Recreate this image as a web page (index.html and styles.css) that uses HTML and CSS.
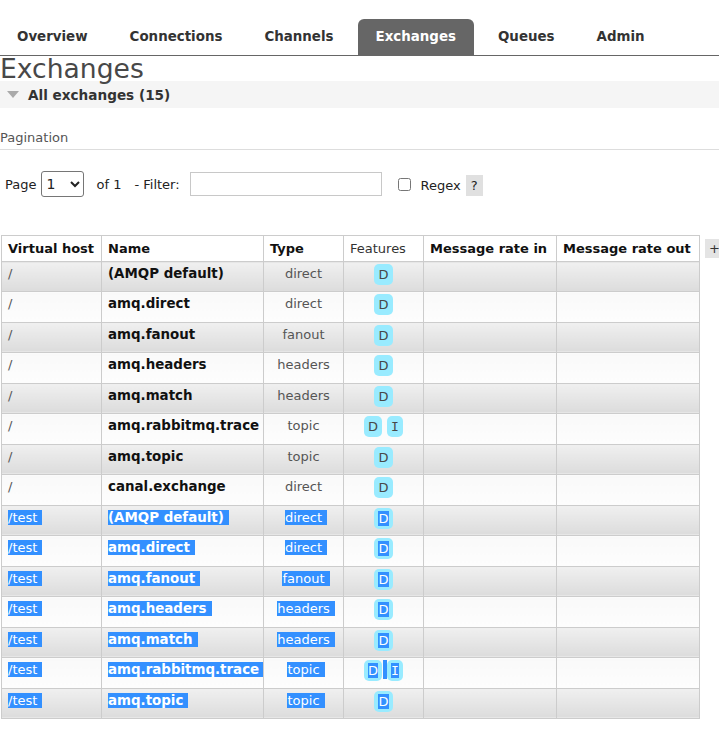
FILE: index.html
```
<!DOCTYPE html>
<html>
<head>
<meta charset="utf-8">
<link rel="stylesheet" href="styles.css">
</head>
<body>
<div class="menu">
  <ul class="tabs">
    <li class="tab">Overview</li>
    <li class="tab">Connections</li>
    <li class="tab">Channels</li>
    <li class="tab active">Exchanges</li>
    <li class="tab">Queues</li>
    <li class="tab">Admin</li>
  </ul>
</div>
<h1 class="title">Exchanges</h1>
<div class="section-head"><span class="tri"></span><span>All exchanges (15)</span></div>
<div class="pag-label">Pagination</div>
<div class="pager">
  <span class="lbl">Page</span>
  <select class="page-sel"><option>1</option></select>
  <span class="lbl of">of 1</span>
  <span class="lbl">- Filter:</span>
  <input class="filter" type="text">
  <input class="chk" type="checkbox">
  <span class="lbl regex">Regex</span>
  <span class="help">?</span>
</div>
<div class="table-wrap">
  <table class="list">
    <colgroup>
      <col class="c-vh"><col class="c-name"><col class="c-type"><col class="c-feat"><col class="c-in"><col class="c-out">
    </colgroup>
    <thead>
      <tr>
        <th>Virtual host</th><th>Name</th><th>Type</th><th class="th-norm">Features</th><th>Message rate in</th><th>Message rate out</th>
      </tr>
    </thead>
    <tbody>
      <tr class="alt1"><td class="vh">/</td><td class="nm">(AMQP default)</td><td class="ty">direct</td><td class="ft"><span class="badge">D</span></td><td></td><td></td></tr>
      <tr class="alt2"><td class="vh">/</td><td class="nm">amq.direct</td><td class="ty">direct</td><td class="ft"><span class="badge">D</span></td><td></td><td></td></tr>
      <tr class="alt1"><td class="vh">/</td><td class="nm">amq.fanout</td><td class="ty">fanout</td><td class="ft"><span class="badge">D</span></td><td></td><td></td></tr>
      <tr class="alt2"><td class="vh">/</td><td class="nm">amq.headers</td><td class="ty">headers</td><td class="ft"><span class="badge">D</span></td><td></td><td></td></tr>
      <tr class="alt1"><td class="vh">/</td><td class="nm">amq.match</td><td class="ty">headers</td><td class="ft"><span class="badge">D</span></td><td></td><td></td></tr>
      <tr class="alt2"><td class="vh">/</td><td class="nm">amq.rabbitmq.trace</td><td class="ty">topic</td><td class="ft"><span class="badge">D</span><span class="gap"></span><span class="badge badge-i">I</span></td><td></td><td></td></tr>
      <tr class="alt1"><td class="vh">/</td><td class="nm">amq.topic</td><td class="ty">topic</td><td class="ft"><span class="badge">D</span></td><td></td><td></td></tr>
      <tr class="alt2"><td class="vh">/</td><td class="nm">canal.exchange</td><td class="ty">direct</td><td class="ft"><span class="badge">D</span></td><td></td><td></td></tr>
      <tr class="alt1"><td class="vh"><span class="sel">/test</span></td><td class="nm"><span class="sel">(AMQP default)</span></td><td class="ty"><span class="sel">direct</span></td><td class="ft"><span class="badge"><span class="sel-in">D</span></span></td><td></td><td></td></tr>
      <tr class="alt2"><td class="vh"><span class="sel">/test</span></td><td class="nm"><span class="sel">amq.direct</span></td><td class="ty"><span class="sel">direct</span></td><td class="ft"><span class="badge"><span class="sel-in">D</span></span></td><td></td><td></td></tr>
      <tr class="alt1"><td class="vh"><span class="sel">/test</span></td><td class="nm"><span class="sel">amq.fanout</span></td><td class="ty"><span class="sel">fanout</span></td><td class="ft"><span class="badge"><span class="sel-in">D</span></span></td><td></td><td></td></tr>
      <tr class="alt2"><td class="vh"><span class="sel">/test</span></td><td class="nm"><span class="sel">amq.headers</span></td><td class="ty"><span class="sel">headers</span></td><td class="ft"><span class="badge"><span class="sel-in">D</span></span></td><td></td><td></td></tr>
      <tr class="alt1"><td class="vh"><span class="sel">/test</span></td><td class="nm"><span class="sel">amq.match</span></td><td class="ty"><span class="sel">headers</span></td><td class="ft"><span class="badge"><span class="sel-in">D</span></span></td><td></td><td></td></tr>
      <tr class="alt2"><td class="vh"><span class="sel">/test</span></td><td class="nm"><span class="sel">amq.rabbitmq.trace</span></td><td class="ty"><span class="sel">topic</span></td><td class="ft"><span class="badge"><span class="sel-in">D</span></span><span class="gap gap-sel"></span><span class="badge badge-i"><span class="sel-in">I</span></span></td><td></td><td></td></tr>
      <tr class="alt1"><td class="vh"><span class="sel">/test</span></td><td class="nm"><span class="sel">amq.topic</span></td><td class="ty"><span class="sel">topic</span></td><td class="ft"><span class="badge"><span class="sel-in">D</span></span></td><td></td><td></td></tr>
    </tbody>
  </table>
  <span class="toggle">+/-</span>
</div>
</body>
</html>
```
FILE: styles.css
```
html, body {
  margin: 0;
  padding: 0;
  overflow: hidden;
}
body {
  font-family: "DejaVu Sans", Verdana, sans-serif;
  font-size: 13px;
  color: #484848;
  background: #fff;
}
.menu {
  height: 55px;
  border-bottom: 1px solid #666;
}
.tabs {
  list-style: none;
  margin: 0;
  padding: 19px 0 0 0;
  display: flex;
  gap: 6px;
}
.tab {
  height: 36px;
  line-height: 36px;
  padding: 0 18px;
  font-weight: bold;
  font-size: 13.4px;
  color: #333;
  border-radius: 6px 6px 0 0;
}
.tab:first-child {
  margin-left: -1px;
}
.tab.active {
  background: #666;
  color: #fff;
}
.title {
  margin: 0;
  font-size: 26.6px;
  font-weight: normal;
  line-height: 25px;
  color: #484848;
}
.section-head {
  display: flex;
  align-items: center;
  height: 27px;
  background: #f5f5f5;
  font-weight: bold;
  font-size: 13.6px;
  color: #333;
}
.tri {
  width: 0;
  height: 0;
  margin: 0 9px 0 7px;
  border-left: 6px solid transparent;
  border-right: 6px solid transparent;
  border-top: 7px solid #aaa;
}
.pag-label {
  margin-top: 21px;
  padding-bottom: 3px;
  border-bottom: 1px solid #ddd;
  line-height: 17px;
  color: #555;
}
.pager {
  display: flex;
  align-items: center;
  height: 26px;
  margin-top: 21px;
  padding-left: 5px;
  color: #222;
}
.page-sel {
  width: 43px;
  height: 26px;
  margin-left: 5px;
  font-family: "DejaVu Sans", sans-serif;
  font-size: 14px;
  color: #222;
  border: 1px solid #767676;
  border-radius: 3px;
  background: #fff;
}
.of {
  margin-left: 12px;
  margin-right: 13px;
}
.filter {
  width: 192px;
  height: 24px;
  box-sizing: border-box;
  margin: 0 0 0 10px;
  border: 1px solid #c8c8c8;
  padding: 0 4px;
}
.chk {
  width: 13px;
  height: 13px;
  margin: 0 0 0 16px;
}
.regex {
  margin-left: 10px;
  margin-top: 3px;
}
.help {
  margin-left: 5px;
  background: #e0e0e0;
  height: 21px;
  line-height: 21px;
  padding: 0 5px;
  margin-top: 3px;
}
.table-wrap {
  display: flex;
  align-items: flex-start;
  margin-top: 38px;
  padding-left: 1px;
}
.list {
  border-collapse: collapse;
  table-layout: fixed;
  width: 698px;
  flex: none;
}
.c-vh { width: 100px; }
.c-name { width: 162px; }
.c-type { width: 80px; }
.c-feat { width: 80px; }
.c-in { width: 133px; }
.c-out { width: 143px; }
.list th, .list td {
  border: 1px solid #ccc;
  padding: 0 6px;
  text-align: left;
  white-space: nowrap;
  overflow: hidden;
}
.list th {
  height: 26px;
  box-sizing: border-box;
  font-weight: bold;
  color: #111;
  background: #fff;
  vertical-align: middle;
  line-height: 18px;
}
.list th.th-norm {
  font-weight: normal;
  color: #333;
}
.list td {
  height: 30.47px;
  box-sizing: border-box;
  padding-top: 4px;
  vertical-align: top;
  line-height: 16px;
}
.alt1 td {
  background: linear-gradient(#f0f0f0, #dcdcdc);
}
.alt2 td {
  background: linear-gradient(#f9f9f9, #fdfdfd);
}
.vh {
  color: #555;
}
.nm {
  font-weight: bold;
  font-size: 13.4px;
  color: #111;
}
.ty {
  color: #555;
  text-align: center !important;
}
.ft {
  text-align: center !important;
  padding-top: 2px !important;
}
.badge {
  display: inline-block;
  background: #99ebff;
  color: #484848;
  border-radius: 5px;
  padding: 2px 4px;
  line-height: 17px;
  vertical-align: top;
}
.badge-i {
  font-family: "DejaVu Sans Mono", monospace;
  padding: 2px 4px;
}
.gap {
  display: inline-block;
  width: 5px;
  height: 19px;
  vertical-align: top;
}
.gap-sel {
  background: #3390ff;
  width: 4px;
  margin: 0 0.5px;
}
.sel {
  background: #3390ff;
  color: #fff;
  padding-right: 5px;
  margin-right: -5px;
}
.sel-in {
  background: #3390ff;
  color: #fff;
}
.toggle {
  flex: none;
  margin: 4px 0 0 5px;
  padding: 0 4px;
  height: 19px;
  line-height: 19px;
  background: #e4e4e4;
  color: #333;
}
```
